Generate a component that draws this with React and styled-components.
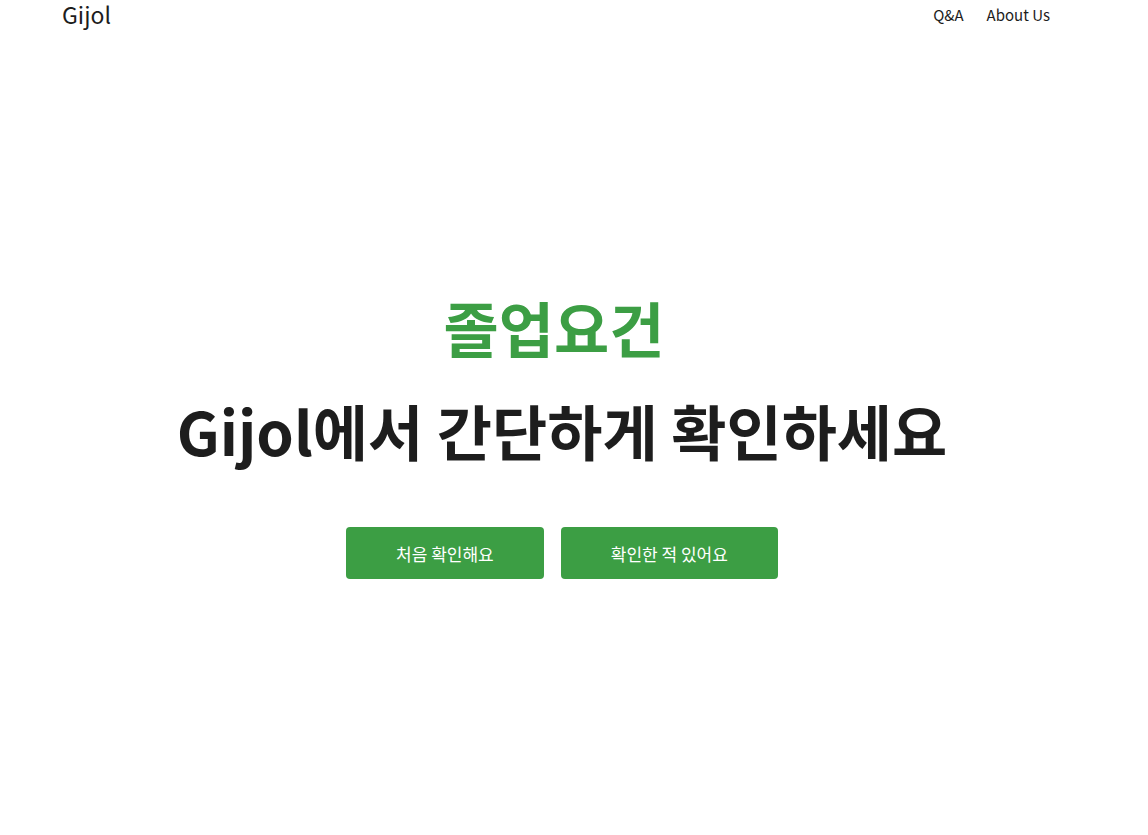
import React from "react";
import styled, { createGlobalStyle } from "styled-components";

const GlobalStyle = createGlobalStyle`
  html, body {
    margin: 0;
    padding: 0;
    background: #ffffff;
    font-family: "Noto Sans CJK KR", "Noto Sans", sans-serif;
    color: #1d1d1d;
  }
`;

const Page = styled.div`
  min-height: 100vh;
  display: flex;
  flex-direction: column;
`;

const Header = styled.header`
  height: 28px;
  display: flex;
  align-items: center;
  justify-content: space-between;
  padding: 0 98px 0 62px;
`;

const Logo = styled.div`
  font-size: 23px;
  line-height: 28px;
  color: #1d1d1d;
`;

const Nav = styled.nav`
  display: flex;
  gap: 23px;
`;

const NavLink = styled.a`
  font-size: 15px;
  color: #1d1d1d;
  text-decoration: none;
  cursor: pointer;
`;

const Hero = styled.main`
  flex: 1;
  display: flex;
  flex-direction: column;
  align-items: center;
  justify-content: center;
  padding: 4px 24px 0 0;
`;

const Eyebrow = styled.h2`
  margin: 0;
  padding-right: 16px;
  font-size: 60px;
  font-weight: 700;
  line-height: 1.3;
  color: #3c9e44;
`;

const Title = styled.h1`
  margin: 25px 0 0;
  font-size: 60px;
  font-weight: 700;
  line-height: 1.3;
  color: #1d1d1d;
`;

const Actions = styled.div`
  display: flex;
  gap: 17px;
  margin-top: 58px;
`;

const Button = styled.button`
  height: 52px;
  padding: 0 50px;
  border: none;
  border-radius: 4px;
  background: #3c9e44;
  color: #ffffff;
  font-family: inherit;
  font-size: 17px;
  cursor: pointer;
`;

export default function App() {
  return (
    <Page>
      <GlobalStyle />
      <Header>
        <Logo>Gijol</Logo>
        <Nav>
          <NavLink>Q&amp;A</NavLink>
          <NavLink>About Us</NavLink>
        </Nav>
      </Header>
      <Hero>
        <Eyebrow>졸업요건</Eyebrow>
        <Title>Gijol에서 간단하게 확인하세요</Title>
        <Actions>
          <Button>처음 확인해요</Button>
          <Button>확인한 적 있어요</Button>
        </Actions>
      </Hero>
    </Page>
  );
}
